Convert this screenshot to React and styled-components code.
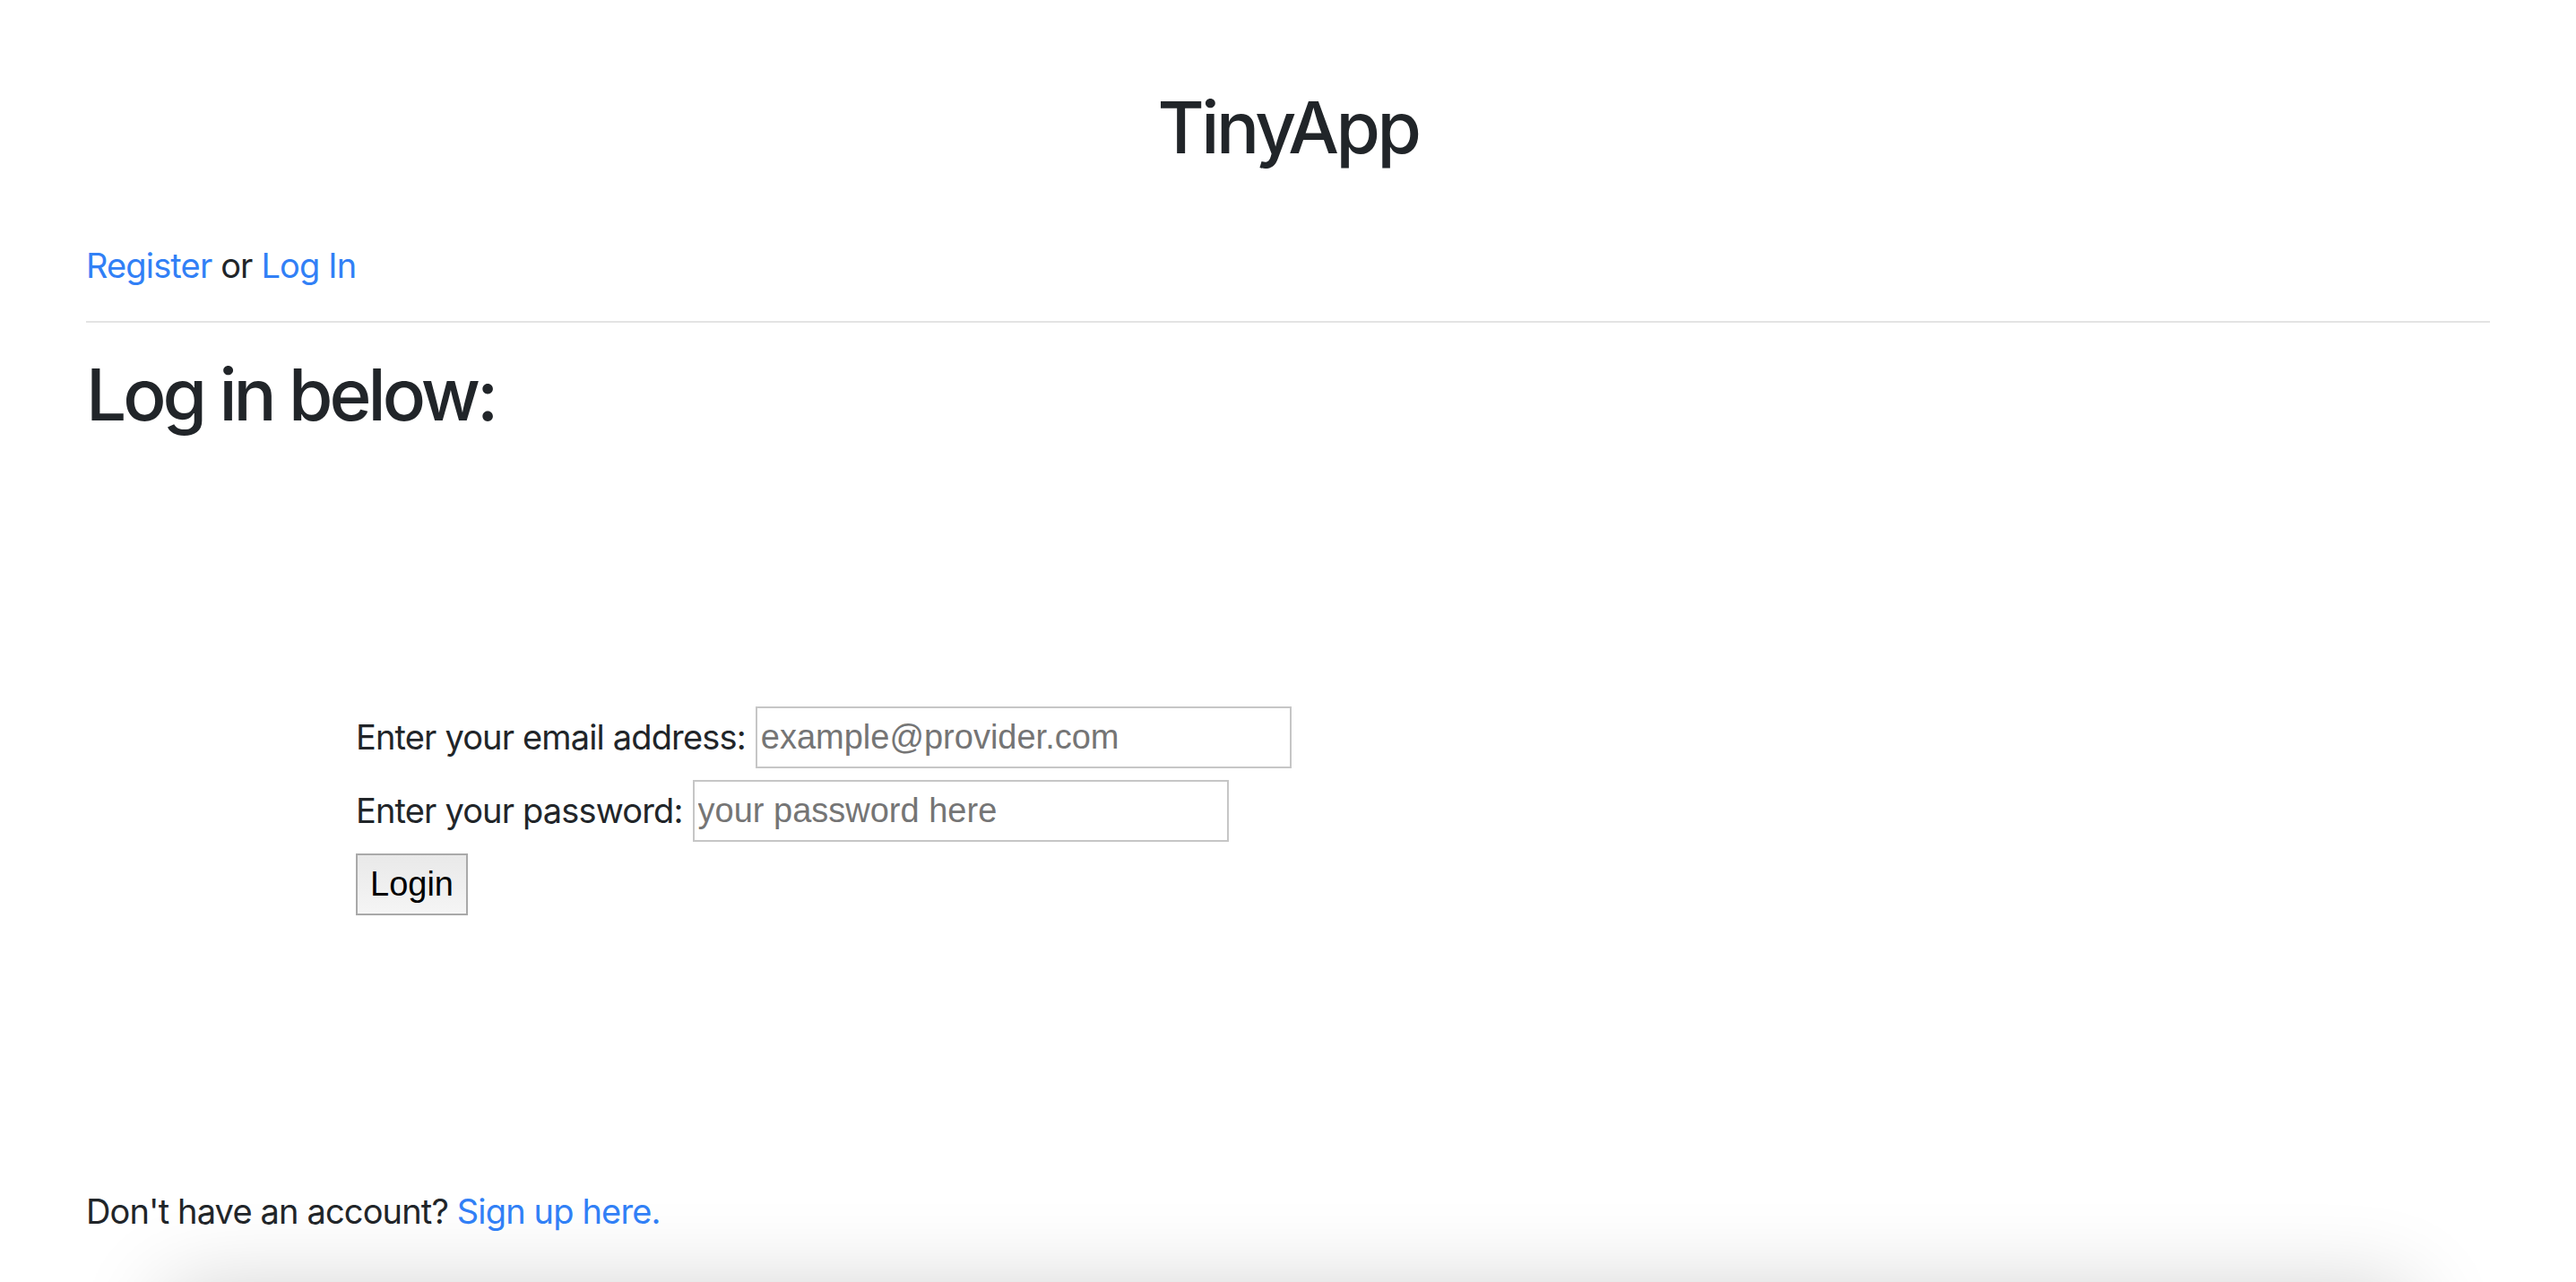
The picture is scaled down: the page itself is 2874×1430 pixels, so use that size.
import React from 'react'
import styled, { createGlobalStyle } from 'styled-components'

const GlobalStyle = createGlobalStyle`
  body {
    margin: 0;
    background: #fff;
    color: #212529;
    font-family: Inter, "Noto Sans", sans-serif;
    font-size: 38px;
    line-height: 1.5;
    letter-spacing: -0.85px;
  }
`

export default function App() {
  return (
    <>
      <GlobalStyle />
      <Page>
        <Brand>TinyApp</Brand>
        <AuthLinks>
          <Link href="#">Register</Link> or <Link href="#">Log In</Link>
        </AuthLinks>
        <Divider />
        <Heading>Log in below:</Heading>
        <LoginForm onSubmit={e => e.preventDefault()}>
          <Row>
            <Label htmlFor="email">Enter your email address:</Label>
            <Input id="email" type="email" placeholder="example@provider.com" />
          </Row>
          <Row>
            <Label htmlFor="password">Enter your password:</Label>
            <Input id="password" type="password" placeholder="your password here" />
          </Row>
          <Row>
            <Button type="submit">Login</Button>
          </Row>
        </LoginForm>
        <Signup>
          Don't have an account? <Link href="#">Sign up here.</Link>
        </Signup>
        <Footer />
      </Page>
    </>
  )
}

const Page = styled.div`
  padding: 94px 96px 0;
  overflow: hidden;
`

const Brand = styled.h1`
  margin: 0;
  text-align: center;
  font-size: 80px;
  font-weight: 500;
  line-height: 96px;
  letter-spacing: -3.5px;
`

const AuthLinks = styled.div`
  margin-top: 78px;
  line-height: 57px;
`

const Link = styled.a`
  color: #3180f6;
  text-decoration: none;
`

const Divider = styled.hr`
  margin: 33px 0 0;
  border: 0;
  border-top: 2px solid #e3e3e3;
`

const Heading = styled.h2`
  margin: 32px 0 0;
  font-size: 80px;
  font-weight: 500;
  line-height: 96px;
  letter-spacing: -4px;
`

const LoginForm = styled.form`
  margin-top: 300px;
  padding-left: 301px;
  display: flex;
  flex-direction: column;
  gap: 13px;
`

const Row = styled.div`
  display: flex;
  align-items: center;
  gap: 11px;
`

const Label = styled.label`
  line-height: 57px;
`

const Input = styled.input`
  box-sizing: border-box;
  width: 598px;
  height: 69px;
  padding: 0 4px;
  border: 2px solid #c6c6c6;
  font-family: "Liberation Sans", Arial, sans-serif;
  font-size: 38px;
  letter-spacing: 0;
  color: #212529;
  &::placeholder {
    color: #757575;
  }
`

const Button = styled.button`
  box-sizing: border-box;
  height: 69px;
  padding: 0 14px;
  border: 2px solid #a9a9a9;
  background: linear-gradient(#e9e9e9, #f5f5f5);
  font-family: "Liberation Sans", Arial, sans-serif;
  font-size: 38px;
  letter-spacing: 0;
  color: #000;
`

const Signup = styled.div`
  margin-top: 302px;
  line-height: 57px;
`

const Footer = styled.div`
  height: 300px;
  margin: 60px 90px 0;
  background: #fff;
  box-shadow: 0 0 100px rgba(0, 0, 0, 0.2);
`
